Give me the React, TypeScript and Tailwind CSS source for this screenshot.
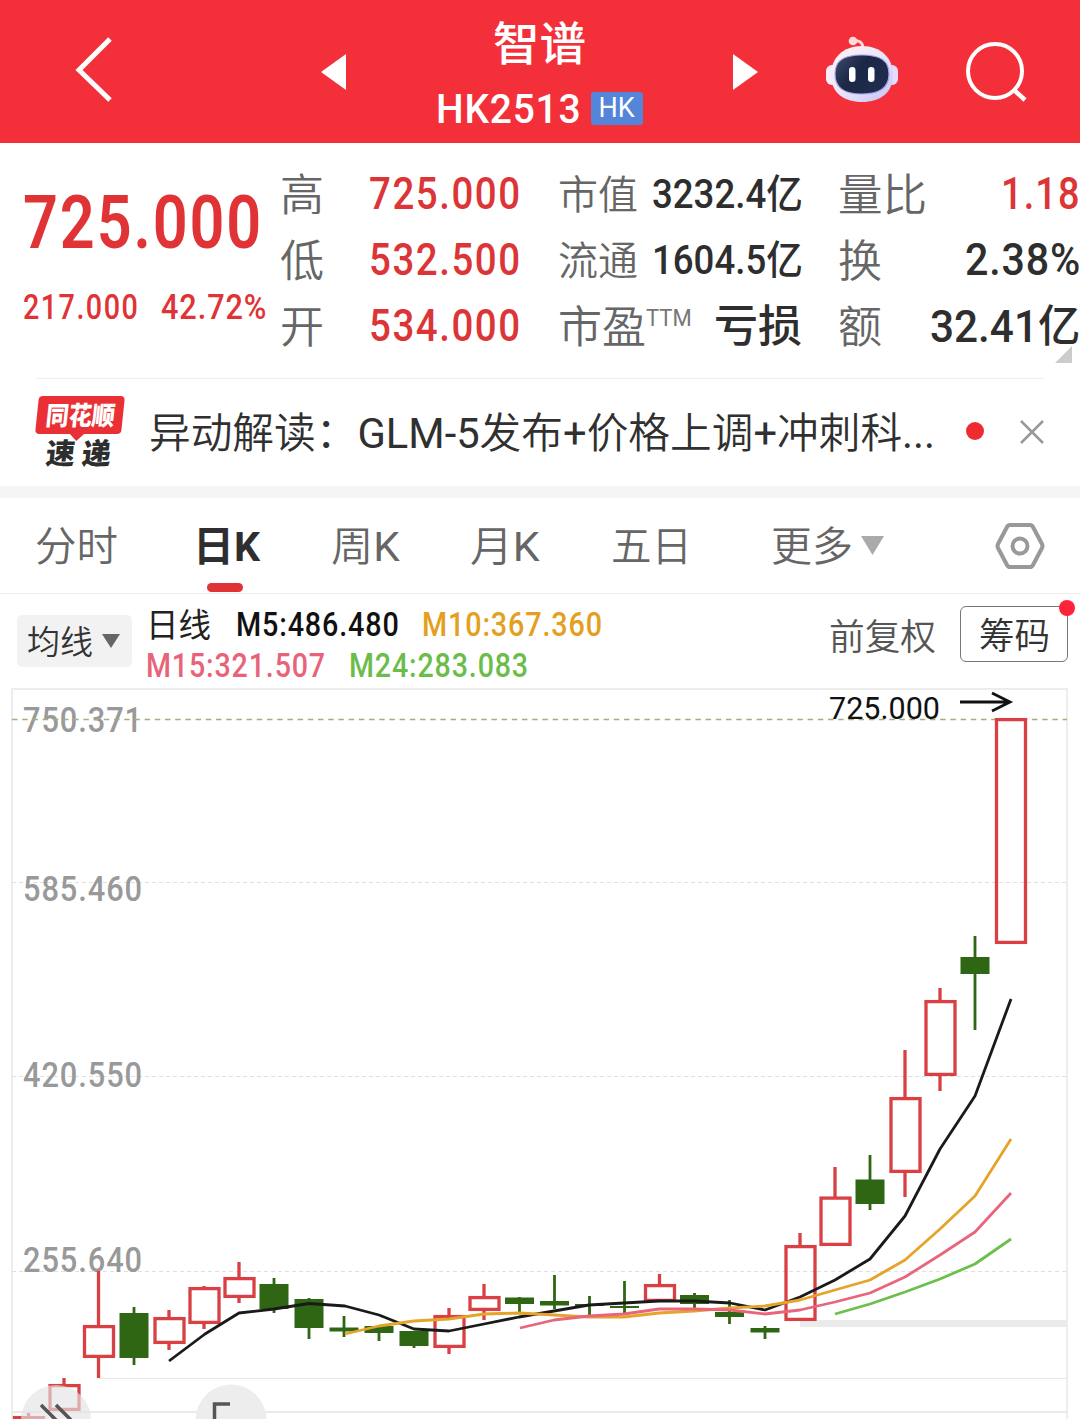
import { useLayoutEffect, useRef, useState } from "react";
import type { ReactNode } from "react";
import clsx from "clsx";

type FitProps = {
  width: number;
  className?: string;
  children: ReactNode;
};

// single line of text squeezed or stretched to a fixed width
const Fit = ({ width, className, children }: FitProps) => {
  const ref = useRef<HTMLSpanElement>(null);
  const [scale, setScale] = useState(1);

  useLayoutEffect(() => {
    if (ref.current) setScale(width / ref.current.offsetWidth);
  }, [width]);

  return (
    <div className={clsx("shrink-0 leading-none", className)} style={{ width }}>
      <span
        ref={ref}
        className="inline-block origin-left whitespace-nowrap align-top"
        style={{ transform: `scaleX(${scale})` }}
      >
        {children}
      </span>
    </div>
  );
};

const RobotIcon = () => (
  <svg width="74" height="70" viewBox="0 0 74 70" fill="none">
    <defs>
      <linearGradient id="shell" x1="10" y1="10" x2="60" y2="66" gradientUnits="userSpaceOnUse">
        <stop stopColor="#fff4f6" />
        <stop offset="0.55" stopColor="#e9e4fa" />
        <stop offset="1" stopColor="#c9c6f5" />
      </linearGradient>
      <linearGradient id="visor" x1="14" y1="20" x2="60" y2="58" gradientUnits="userSpaceOnUse">
        <stop stopColor="#3a4766" />
        <stop offset="0.4" stopColor="#1b2745" />
        <stop offset="1" stopColor="#202d50" />
      </linearGradient>
    </defs>
    <path d="M28 6c6-1 10 1 10 8" stroke="#ffd3d6" strokeWidth="3" />
    <circle cx="28" cy="6" r="4.3" fill="#ffd9dc" />
    <rect x="1" y="30" width="12" height="20" rx="6" fill="#f6eefb" />
    <rect x="61" y="30" width="12" height="20" rx="6" fill="#e3dcfa" />
    <path d="M37 11c19 0 31 12 31 29 0 18-13 27-31 27S6 58 6 40c0-17 12-29 31-29z" fill="url(#shell)" />
    <path
      d="M37 20c19 0 27 6 27 19s-8 20-27 20-27-7-27-20 8-19 27-19z"
      fill="url(#visor)"
      stroke="#a9a2ea"
      strokeWidth="1.2"
    />
    <rect x="24" y="32" width="6.5" height="15" rx="3.2" fill="#fff" />
    <rect x="43" y="32" width="6.5" height="15" rx="3.2" fill="#fff" />
  </svg>
);

const Header = () => (
  <header className="flex h-[143px] items-center bg-[#f3303a] text-white">
    <svg className="mb-[5px] ml-[74px] shrink-0" width="40" height="68" viewBox="0 0 40 68" fill="none">
      <path d="M36 4 5 35l31 30" stroke="white" strokeWidth="5" />
    </svg>
    <svg className="ml-[207px] shrink-0" width="25" height="36" viewBox="0 0 25 36">
      <path d="M25 0v36L0 18z" fill="white" />
    </svg>
    <div className="ml-[89px] flex w-[208px] shrink-0 flex-col items-center pt-[7px]">
      <Fit width={93} className="text-[46px] font-medium">智谱</Fit>
      <div className="mt-[22px] flex items-center gap-[10px]">
        <Fit width={145} className="pt-px text-[40px] font-medium tracking-[0.02em]">HK2513</Fit>
        <div className="mb-px flex h-[33px] w-[52px] items-center justify-center rounded-[3px] bg-[#5585d8]">
          <Fit width={36} className="text-[27px]">HK</Fit>
        </div>
      </div>
    </div>
    <svg className="ml-[90px] shrink-0" width="25" height="36" viewBox="0 0 25 36">
      <path d="M0 0v36l25-18z" fill="white" />
    </svg>
    <div className="mb-[4px] ml-[67px] shrink-0">
      <RobotIcon />
    </div>
    <svg className="ml-[67px] shrink-0" width="62" height="62" viewBox="0 0 62 62" fill="none">
      <circle cx="29" cy="30" r="27" stroke="white" strokeWidth="4" />
      <path d="m47 48 12 11" stroke="white" strokeWidth="4.5" />
    </svg>
  </header>
);

const prices = [
  { label: "高", value: "725.000" },
  { label: "低", value: "532.500" },
  { label: "开", value: "534.000" },
];

const Quote = () => (
  <section className="relative flex h-[235px] pt-[18px]">
    <div className="w-[280px] shrink-0 pl-[23px] text-[#e03335]">
      <Fit width={240} className="mt-[25px] text-[74px] font-semibold tracking-[0.03em]">725.000</Fit>
      <div className="mt-[30px] flex">
        <Fit width={116} className="text-[35px] font-medium tracking-[0.05em]">217.000</Fit>
        <Fit width={106} className="ml-[22px] text-[35px] font-medium tracking-[0.03em]">42.72%</Fit>
      </div>
    </div>
    <div className="w-[278px] shrink-0">
      {prices.map((p) => (
        <div key={p.label} className="flex h-[66px] items-center">
          <Fit width={44} className="pt-[4px] text-[44px] font-[350] text-[#666]">{p.label}</Fit>
          <Fit width={153} className="ml-[45px] text-[44px] font-medium tracking-[0.04em] text-[#dc3538]">
            {p.value}
          </Fit>
        </div>
      ))}
    </div>
    <div className="w-[280px] shrink-0 text-[#2e2e2e]">
      <div className="flex h-[66px] items-center">
        <Fit width={80} className="pt-[4px] text-[40px] font-[350] text-[#666]">市值</Fit>
        <Fit width={151} className="ml-[14px] pt-px text-[40px] font-medium">3232.4亿</Fit>
      </div>
      <div className="flex h-[66px] items-center">
        <Fit width={80} className="pt-[4px] text-[40px] font-[350] text-[#666]">流通</Fit>
        <Fit width={151} className="ml-[14px] pt-px text-[40px] font-medium">1604.5亿</Fit>
      </div>
      <div className="flex h-[66px] items-center">
        <Fit width={88} className="pt-[4px] text-[44px] font-[350] text-[#666]">市盈</Fit>
        <Fit width={46} className="mb-4 text-[23px] text-[#777]">TTM</Fit>
        <Fit width={88} className="ml-[22px] pt-[2px] text-[44px] font-medium">亏损</Fit>
      </div>
    </div>
    <div className="w-[242px] shrink-0 text-[#2e2e2e]">
      <div className="flex h-[66px] items-center justify-between">
        <Fit width={89} className="pt-[4px] text-[44px] font-[350] text-[#666]">量比</Fit>
        <Fit width={80} className="-mr-px text-[44px] font-medium tracking-[0.03em] text-[#dc3538]">1.18</Fit>
      </div>
      <div className="flex h-[66px] items-center justify-between">
        <Fit width={44} className="pt-[4px] text-[44px] font-[350] text-[#666]">换</Fit>
        <Fit width={116} className="-mr-px text-[44px] font-medium tracking-[0.02em]">2.38%</Fit>
      </div>
      <div className="flex h-[66px] items-center justify-between">
        <Fit width={44} className="pt-[4px] text-[44px] font-[350] text-[#666]">额</Fit>
        <Fit width={150} className="pt-px text-[44px] font-medium">32.41亿</Fit>
      </div>
    </div>
    <svg className="absolute right-[8px] bottom-[15px]" width="17" height="17" viewBox="0 0 17 17">
      <path d="M17 0v17H0z" fill="#ccc" />
    </svg>
  </section>
);

const NewsBar = () => (
  <section className="border-b-[12px] border-[#f5f5f5]">
    <div className="mx-9 h-px bg-[#f0f0f0]" />
    <div className="flex h-[107px] items-center">
      <div className="ml-[37px] w-[89px] shrink-0">
        <div className="relative flex h-[38px] w-[86px] -skew-x-6 items-center justify-center rounded-[4px] bg-[#e93035] text-white">
          <Fit width={69} className="pt-[2px] text-[26px] font-black">同花顺</Fit>
          <span className="absolute -bottom-[5px] left-[37px] h-[10px] w-[10px] rotate-45 bg-[#e93035]" />
        </div>
        <div className="mt-[6px] ml-[9px] flex -skew-x-6 gap-[7px] text-[#2e2e2e]">
          <Fit width={29} className="text-[29px] font-black">速</Fit>
          <Fit width={29} className="text-[29px] font-black">递</Fit>
        </div>
      </div>
      <Fit width={786} className="ml-[23px] pt-[3px] text-[42px] font-[350] text-[#303030]">
        异动解读：<span className="font-normal">GLM-5</span>发布<span className="font-normal">+</span>价格上调
        <span className="font-normal">+</span>冲刺科<span className="font-normal">...</span>
      </Fit>
      <span className="mb-[3px] ml-[31px] h-[18px] w-[18px] rounded-full bg-[#ee2b31]" />
      <svg className="mb-[2px] ml-[36px]" width="24" height="24" viewBox="0 0 24 24" fill="none">
        <path d="m1 1 22 22M23 1 1 23" stroke="#999" strokeWidth="2.5" />
      </svg>
    </div>
  </section>
);

const Tabs = () => (
  <nav className="flex h-24 items-center border-b border-[#ebebeb] text-[41px] font-[350] text-[#666]">
    <Fit width={83} className="ml-[35px] pt-[4px]">分时</Fit>
    <div className="relative ml-[75px]">
      <Fit width={67} className="pt-[4px] font-bold text-[#2e2e2e]">日K</Fit>
      <span className="absolute -bottom-[24px] left-[14px] h-[9px] w-9 rounded-full bg-[#e03335]" />
    </div>
    <Fit width={69} className="ml-[71px] pt-[4px]">
      周<span className="font-normal">K</span>
    </Fit>
    <Fit width={70} className="ml-[70px] pt-[4px]">
      月<span className="font-normal">K</span>
    </Fit>
    <Fit width={81} className="ml-[71px] pt-[4px]">五日</Fit>
    <Fit width={82} className="ml-[79px] pt-[4px]">更多</Fit>
    <svg className="ml-[8px]" width="23" height="19" viewBox="0 0 23 19">
      <path d="M0 0h23L11.5 19z" fill="#aaa" />
    </svg>
    <svg className="ml-[111px]" width="50" height="48" viewBox="0 0 50 48" fill="none">
      <path
        d="M15 3h20q2 0 3 2l9 17q1 2 0 4l-9 17q-1 2-3 2H15q-2 0-3-2L3 26q-1-2 0-4l9-17q1-2 3-2z"
        stroke="#999"
        strokeWidth="4"
      />
      <circle cx="25" cy="24" r="7.5" stroke="#999" strokeWidth="4" />
    </svg>
  </nav>
);

const Indicators = () => (
  <section className="flex h-[86px] pt-[9px]">
    <div className="mt-[12px] ml-[17px] flex h-[52px] w-[115px] shrink-0 items-center rounded-[5px] bg-[#f2f2f2] pl-[10px]">
      <Fit width={66} className="pt-[3px] text-[33px] font-[350] text-[#333]">均线</Fit>
      <svg className="ml-[9px]" width="18" height="14" viewBox="0 0 18 14">
        <path d="M0 0h18L9 14z" fill="#666" />
      </svg>
    </div>
    <div className="ml-[14px] w-[683px] shrink-0 text-[34px] font-medium tracking-[0.03em]">
      <div className="flex h-[41px] items-center">
        <Fit width={65} className="pt-[3px] text-[33px] font-normal tracking-normal text-[#222]">日线</Fit>
        <Fit width={164} className="ml-[25px] text-[#111]">M5:486.480</Fit>
        <Fit width={181} className="ml-[22px] text-[#e3a020]">M10:367.360</Fit>
      </div>
      <div className="flex h-[41px] items-center">
        <Fit width={180} className="text-[#e8637a]">M15:321.507</Fit>
        <Fit width={180} className="ml-[23px] text-[#6bbd4a]">M24:283.083</Fit>
      </div>
    </div>
    <Fit width={107} className="mt-[17px] text-[36px] font-[350] text-[#555]">前复权</Fit>
    <div className="relative mt-[3px] ml-6 flex h-14 w-[108px] shrink-0 items-center justify-center rounded-[6px] border border-[#777]">
      <Fit width={71} className="pt-[6px] text-[36px] font-[350] text-[#333]">筹码</Fit>
      <span className="absolute -top-[7px] -right-[8px] h-4 w-4 rounded-full bg-[#ff2337]" />
    </div>
  </section>
);

// x centre, body top, body bottom, wick top, wick bottom, rising
type Candle = [number, number, number, number, number, boolean];

const candles: Candle[] = [
  [28.5, 1416, 1440, 1413, 1440, true],
  [64, 1384, 1411, 1378, 1411, true],
  [98.5, 1325, 1358, 1271, 1378, true],
  [134, 1313, 1358, 1307, 1365, false],
  [169, 1317, 1344, 1310, 1350, true],
  [204, 1287, 1324, 1286, 1329, true],
  [239, 1277, 1298, 1262, 1303, true],
  [274, 1284, 1309, 1278, 1313, false],
  [309, 1299, 1328, 1298, 1339, false],
  [344, 1327.5, 1331.5, 1316, 1337, false],
  [379, 1326, 1333, 1326, 1341, false],
  [414, 1331, 1346, 1331, 1348, false],
  [449, 1315, 1348, 1308, 1354, true],
  [484, 1296, 1311, 1284, 1320, true],
  [519.5, 1297.5, 1304, 1297, 1312, false],
  [554.5, 1301, 1305.5, 1275, 1309, false],
  [589.5, 1304, 1306, 1296, 1315, false],
  [624.5, 1306, 1308, 1281, 1313, false],
  [659.5, 1284, 1302, 1274, 1302, true],
  [694.5, 1295, 1304, 1293, 1308, false],
  [729.5, 1312, 1317, 1300, 1324, false],
  [765, 1328, 1332.5, 1326, 1339, false],
  [800, 1245, 1321, 1233, 1321, true],
  [835, 1196.5, 1246, 1167, 1246, true],
  [870, 1179.5, 1204, 1155, 1210, false],
  [905, 1097, 1173, 1050, 1197, true],
  [940, 1000, 1076, 988, 1091, true],
  [975, 957, 974, 936, 1030, false],
  [1010.5, 718, 944, 718, 944, true],
];

const averages = [
  {
    color: "#1a1a1a",
    points:
      "169,1361 205,1334 239,1313 274,1309 309,1303.5 345,1306 379,1315 414,1329 449,1331 484,1324 519,1317 554,1311 589,1305 624,1303 659,1301 694,1301 730,1303 765,1310 800,1297 835,1280 870,1259 905,1216 940,1149 975,1096 1011,999",
  },
  {
    color: "#e5a32a",
    points:
      "345,1334 379,1326 414,1321 449,1319 484,1314 519,1313 554,1315 589,1317 624,1317 659,1313 694,1311 730,1308 765,1306 800,1300 835,1290 870,1280 905,1260 940,1229 975,1196 1011,1139",
  },
  {
    color: "#e8657c",
    points:
      "520,1328 554,1320 589,1316 624,1314 659,1309 694,1309 730,1310 765,1314 800,1310 835,1302 870,1293 905,1277 940,1255 975,1232 1011,1193",
  },
  {
    color: "#6cbf4c",
    points: "835,1314 870,1304 905,1292 940,1279 975,1264 1011,1239",
  },
];

const axisLabels = [
  { y: 732, text: "750.371" },
  { y: 901, text: "585.460" },
  { y: 1087, text: "420.550" },
  { y: 1272, text: "255.640" },
];

const KChart = () => (
  <svg className="block" width="1080" height="739" viewBox="0 680 1080 739" fill="none">
    <path d="M12 1419V689h1055v730" stroke="#e8e8e8" strokeWidth="1.5" />
    <path d="M12 882.5h1055M12 1076.5h1055M12 1271.5h1055" stroke="#e0e0e0" strokeDasharray="4 3" />
    <path d="M99 1378.5h968" stroke="#e8e8e8" />
    <path d="M12 1412h1055" stroke="#e3e3e3" strokeWidth="1.5" />
    <path d="M800 1323.5h267" stroke="#ebebeb" strokeWidth="7" />

    {axisLabels.map((l) => (
      <text
        key={l.text}
        x="23"
        y={l.y}
        className="text-[35px] font-medium tracking-[0.03em]"
        fill="#999"
        textLength="120"
        lengthAdjust="spacingAndGlyphs"
      >
        {l.text}
      </text>
    ))}
    <path d="M12 719.5h1055" stroke="#a8ad80" strokeWidth="1.3" strokeDasharray="5.5 4.7" />

    {candles.map(([x, top, bottom, high, low, up]) =>
      up ? (
        <g key={x} stroke="#d84043" strokeWidth="3.3">
          <path d={`M${x} ${high}V${top + 1}M${x} ${bottom - 1}V${low}`} />
          <rect x={x - 14} y={top + 1.6} width="29" height={bottom - top - 3.2} />
        </g>
      ) : (
        <g key={x} fill="#2f6614">
          <rect x={x - 14.5} y={top} width="29" height={bottom - top} />
          <rect x={x - 1.4} y={high} width="2.8" height={low - high} />
        </g>
      ),
    )}

    {averages.map((a) => (
      <polyline key={a.color} points={a.points} stroke={a.color} strokeWidth="2.8" strokeLinejoin="round" />
    ))}

    <text x="829" y="719" className="text-[31px]" fill="#111" textLength="111" lengthAdjust="spacingAndGlyphs">
      725.000
    </text>
    <path d="M960 702h49M992 693l18 9-18 9" stroke="#111" strokeWidth="2.8" />

    <circle cx="56" cy="1420" r="35" fill="#e4e4e4" fillOpacity="0.65" />
    <path d="m41 1405 20 20M56 1405l20 20" stroke="#555" strokeWidth="3.5" />
    <circle cx="231" cy="1420" r="35.5" fill="#ededed" />
    <path d="M230 1404h-15.5v18" stroke="#555" strokeWidth="3.5" />
  </svg>
);

const App = () => {
  return (
    <div className="h-[1419px] w-[1080px] overflow-hidden bg-white font-['Roboto','Noto_Sans_CJK_SC',sans-serif]">
      <Header />
      <Quote />
      <NewsBar />
      <Tabs />
      <Indicators />
      <KChart />
    </div>
  );
};

export default App;
